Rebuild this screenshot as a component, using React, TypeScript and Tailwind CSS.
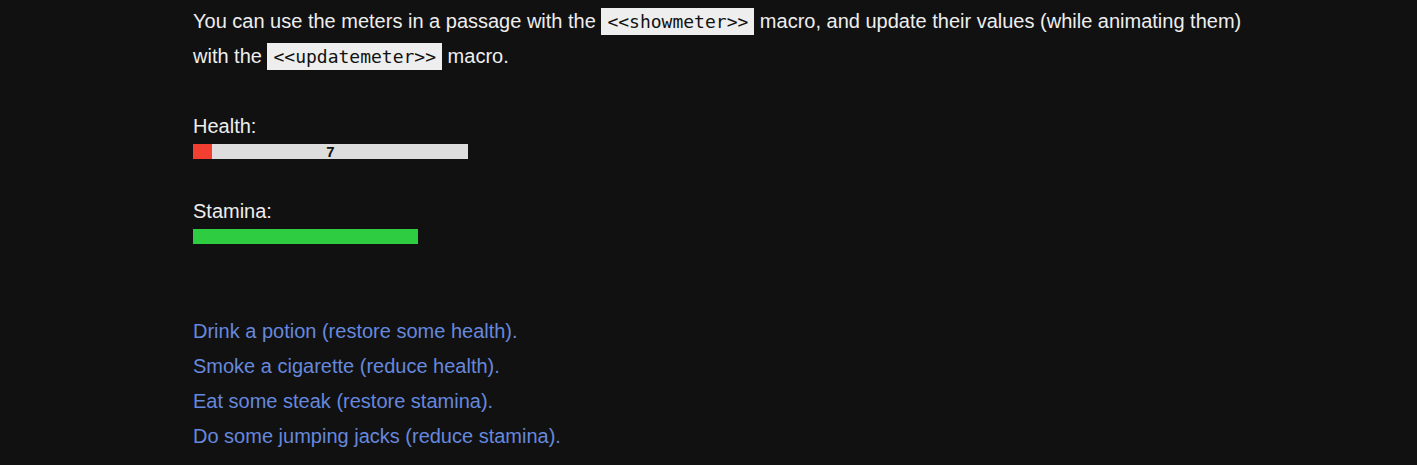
const links = [
  'Drink a potion (restore some health).',
  'Smoke a cigarette (reduce health).',
  'Eat some steak (restore stamina).',
  'Do some jumping jacks (reduce stamina).',
];

function Code({ children }: { children: string }) {
  return (
    <code className="bg-[#eeeeee] text-[#111111] px-[6px] py-[3px] text-[18px] font-['DejaVu_Sans_Mono',monospace]">
      {children}
    </code>
  );
}

function Meter({ width, value, color, label }: { width: number; value: number; color: string; label?: string }) {
  return (
    <div className="relative h-[15px] bg-[#dddddd]" style={{ width }}>
      <div className="h-full" style={{ width: `${value}%`, backgroundColor: color }} />
      {label && (
        <div className="absolute inset-0 flex items-center justify-center text-[15px] font-bold leading-none text-[#111111]">
          {label}
        </div>
      )}
    </div>
  );
}

export default function App() {
  return (
    <div className="min-h-[465px] bg-[#111111] text-[#eeeeee] font-['Liberation_Sans',Arial,sans-serif] text-[20px] leading-[35px]">
      <div className="ml-[193px] w-[1080px] pt-[4px]">
        <p>
          You can use the meters in a passage with the <Code>{'<<showmeter>>'}</Code> macro, and update their values (while animating them) with the <Code>{'<<updatemeter>>'}</Code> macro.
        </p>
        <div className="h-[35px]" />
        <div>Health:</div>
        <Meter width={275} value={7} color="#f33e32" label="7" />
        <div className="h-[35px]" />
        <div>Stamina:</div>
        <Meter width={225} value={100} color="#2ecc40" />
        <div className="h-[70px]" />
        <div className="flex flex-col">
          {links.map((l) => (
            <a key={l} className="text-[#6688dd] cursor-pointer w-fit">
              {l}
            </a>
          ))}
        </div>
      </div>
    </div>
  );
}
